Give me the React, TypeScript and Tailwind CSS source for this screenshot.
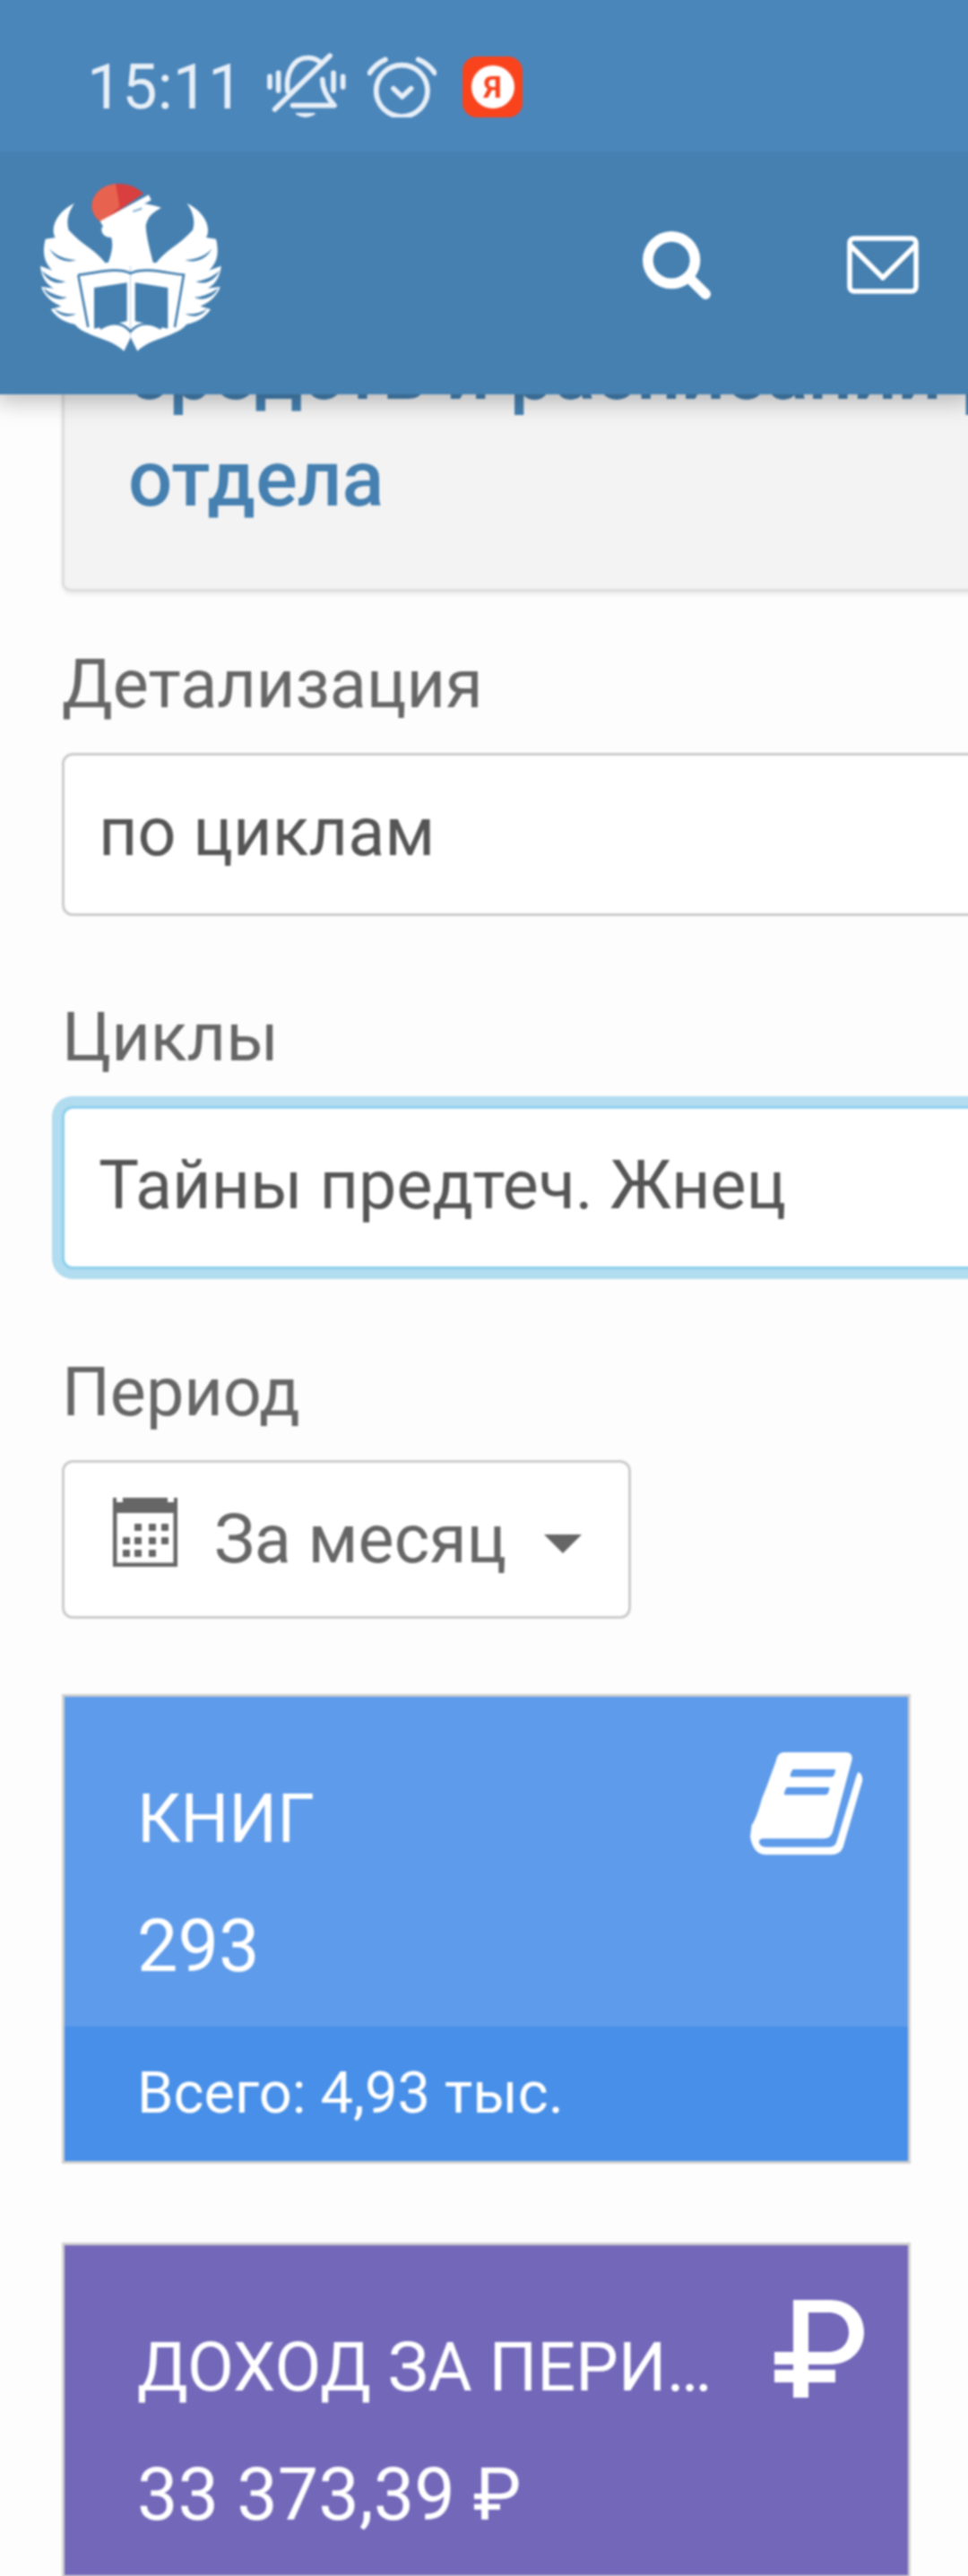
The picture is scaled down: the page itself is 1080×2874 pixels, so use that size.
import React from 'react';

const FONT = "font-['Roboto','Liberation_Sans',sans-serif]";

const Logo = () => (
  <svg width="240" height="220" viewBox="0 0 720 660" className="block">
    <g>
      {[0, 1].map((side) => (
        <g key={side} transform={side ? 'translate(695,0) scale(-1,1)' : undefined}>
          <path fill="#fff" d="M160 110C105 135 75 190 95 225L62 230C50 280 60 310 85 335L45 320C48 360 70 385 90 395L48 390C60 425 90 445 115 455L80 465C100 495 130 510 160 515C190 555 280 560 325 605L347 560V300L262 310C235 270 185 250 140 200C130 170 140 135 160 110Z" />
          <path fill="#4580b0" d="M75 262C95 285 130 300 165 300C135 312 95 300 75 262Z" />
          <path fill="#4580b0" d="M50 335C75 360 110 370 130 372C100 385 65 370 50 335Z" />
          <path fill="#4580b0" d="M55 395C85 415 115 425 135 425C105 440 70 425 55 395Z" />
          <path fill="#4580b0" d="M90 462C115 480 140 482 165 480C140 495 110 490 90 462Z" />
        </g>
      ))}
      <path fill="#fff" d="M250 195C262 170 300 140 350 125C370 105 400 110 450 125C425 140 405 150 398 185C400 230 415 275 425 320H268C285 280 290 245 282 225C265 225 248 215 250 195Z" />
    </g>
    <path d="M225 393L335 376V505L225 530Z" fill="#4580b0" />
    <path d="M362 376L472 393V530L362 505Z" fill="#4580b0" />
    <path d="M172 350C230 345 300 322 347 345C395 322 470 345 525 350L495 525M172 350L205 525" fill="none" stroke="#4580b0" strokeWidth="8" />
    <path d="M245 530C285 505 320 510 347 540C372 510 410 505 450 530" fill="none" stroke="#4580b0" strokeWidth="8" />
    <path d="M250 175C215 150 205 110 235 75C265 40 340 30 390 78Z" fill="#d93f3f" />
    <path d="M250 175C215 150 205 110 235 75C250 58 272 48 297 46L310 122Z" fill="#e8634f" />
    <path d="M245 170L408 82L416 100L255 188Z" fill="#fff" />
    <path d="M355 138L385 128" stroke="#8fb3d0" strokeWidth="7" />
  </svg>
);

const MutedBell = () => (
  <svg width="93" height="80" viewBox="40 30 280 240" fill="none" stroke="#e7eff7" strokeWidth="17" strokeLinecap="round" strokeLinejoin="round">
    <path d="M118 165C110 100 140 52 185 52C205 52 215 56 226 66" />
    <path d="M75 225L260 45" />
    <path d="M235 125C235 160 250 185 275 212L135 212" />
    <path d="M148 240Q178 258 208 240Z" fill="#e7eff7" strokeWidth="6" />
    <path d="M58 115V150M87 103V162M272 103V162M304 115V150" />
  </svg>
);

const AlarmClock = () => (
  <svg width="77" height="68" viewBox="395 35 231 204" fill="none" stroke="#e7eff7" strokeWidth="17" strokeLinecap="round" strokeLinejoin="round">
    <circle cx="510" cy="150" r="86" />
    <path d="M482 142L511 170L541 142" />
    <path d="M402 90Q422 60 455 45M565 45Q600 60 620 90" />
  </svg>
);

const SearchIcon = () => (
  <svg width="76" height="76" viewBox="64 128 1664 1664" fill="#fff">
    <path d="M1216 832q0-185-131.500-316.500t-316.500-131.500-316.500 131.500-131.500 316.500 131.500 316.500 316.500 131.500 316.500-131.500 131.500-316.500zm512 832q0 52-38 90t-90 38q-54 0-90-38l-343-342q-179 124-399 124-143 0-273.500-55.500t-225-150-150-225-55.500-273.500 55.500-273.500 150-225 225-150 273.500-55.500 273.500 55.500 225 150 150 225 55.500 273.500q0 220-124 399l343 343q37 37 37 90z" />
  </svg>
);

const EnvelopeIcon = () => (
  <svg width="80" height="65" viewBox="0 0 80 65" fill="none" stroke="#fff" strokeWidth="5.500" strokeLinejoin="round">
    <rect x="3" y="3" width="74" height="59" rx="5" />
    <path d="M3 10L40 47L77 10" />
  </svg>
);

const CalendarIcon = () => (
  <svg width="72" height="77" viewBox="0 0 72 77" fill="#666" className="mb-[17px]">
    <path d="M0 0H4V5H11V0H61V5H68V0H72V77H0ZM4.500 17V72.500H67.500V17Z" fillRule="evenodd" />
    {[
      [28, 33], [44, 33], [58, 33],
      [15, 48], [28, 48], [44, 48], [58, 48],
      [15, 62], [28, 62], [44, 62],
    ].map(([x, y]) => (
      <rect key={`${x}-${y}`} x={x - 4} y={y - 4} width="8" height="8" rx="1" />
    ))}
  </svg>
);

const BookIcon = () => (
  <svg width="127" height="117" viewBox="50 45 380 350" fill="#fff">
    <path fillRule="evenodd" d="M160 48H370Q392 48 390 72L325 315Q318 336 295 336H95Q78 336 80 350Q84 364 105 364H315Q332 364 338 348L405 125Q408 118 412 114Q428 125 424 145L360 365Q350 390 320 390H100Q60 388 50 330L55 290Q62 285 78 240L90 200Q105 165 115 135L135 80Q140 50 160 48ZM195 105Q190 105 188 112L184 122Q182 130 188 130H320Q328 130 330 124L334 112Q336 105 330 105ZM175 165Q170 165 168 172L164 182Q162 190 168 190H300Q308 190 310 184L314 172Q316 165 310 165Z" />
  </svg>
);

const RubleIcon = () => (
  <svg width="100" height="109" viewBox="0 0 100 109" fill="#fff">
    <path fillRule="evenodd" d="M21 0H62C85 0 100 16 100 36C100 56 85 72 62 72H38V78H68V92H38V109H21V92H0V78H21V72H0V58H21ZM38 14V58H60C75 58 83 48 83 36C83 24 75 14 60 14Z" />
  </svg>
);

const StatCard = ({ title, value, icon, color, footer, footerColor }: {
  title: string;
  value: string;
  icon: React.ReactNode;
  color: string;
  footer?: string;
  footerColor?: string;
}) => (
  <div className={`w-[947px] border-[3px] border-[#d0d0d0] text-white ${color}`}>
    <div className="flex h-[368px] pl-[81px] pr-[49px]">
      <div className="w-[642px] pt-[92px]">
        <div className="truncate text-[75.500px] leading-[88px] uppercase">{title}</div>
        <div className="mt-[55px] text-[81px] leading-[88px]">{value}</div>
      </div>
      <div className="ml-auto pt-[61px]">{icon}</div>
    </div>
    {footer && (
      <div className={`flex h-[150px] items-center pl-[81px] text-[65px] ${footerColor}`}>{footer}</div>
    )}
  </div>
);

const App = () => {
  return (
    <div className="h-[2874px] w-[1080px] overflow-hidden bg-[#fdfdfd]">
      {/* soft upscaled look; sheet overshoots the page by 4px so the blur leaves no pale edge */}
      <div className={`relative -ml-[4px] -mt-[4px] h-[2882px] w-[1088px] overflow-hidden bg-[#fdfdfd] blur-[1px] ${FONT}`}>
        <header className="absolute inset-x-0 top-0 z-10 shadow-[0_8px_24px_rgba(0,0,0,0.25)]">
          <div className="flex h-[173px] items-center bg-[#4b86bb] pl-[101px] pt-[29px] text-[#e7eff7]">
            <span className="w-[175px] text-[70px] leading-none">15:11</span>
            <span className="ml-[23px]"><MutedBell /></span>
            <span className="ml-[22px]"><AlarmClock /></span>
            <div className="ml-[29px] flex h-[68px] w-[67px] items-center justify-center rounded-[16px] bg-[#f9431c]">
              <div className="flex h-[48px] w-[48px] items-center justify-center rounded-full bg-white text-[34px] font-bold leading-none text-[#f9431c]">Я</div>
            </div>
          </div>
          <div className="flex h-[271px] items-center bg-[#4580b0]">
            <div className="ml-[34px] mt-[-10px]"><Logo /></div>
            <div className="mb-[18px] ml-[447px]"><SearchIcon /></div>
            <div className="mb-[18px] ml-[152px]"><EnvelopeIcon /></div>
          </div>
        </header>

        <main className="w-[1500px] pl-[73px] pt-[304px] text-[75.500px] text-[#666]">
          <div className="h-[360px] overflow-hidden rounded-[10px] border-[3px] border-[#ddd] bg-[#f3f3f3] pl-[71px] pt-[53px] text-[87px] font-medium leading-[119px] text-[#4580b0] shadow-[0_3px_4px_rgba(0,0,0,0.08)]">
            <div className="whitespace-nowrap">средств и расписании р</div>
            <div>отдела</div>
          </div>

          <div className="mt-[51px] leading-[105px]">Детализация</div>
          <div className="mt-[24px] flex h-[182px] items-center rounded-[12px] border-[3px] border-[#ccc] bg-white pb-[4px] pl-[38px] text-[#555]">по циклам</div>

          <div className="mt-[83px] leading-[105px]">Циклы</div>
          <div className="mt-[24px] flex h-[182px] items-center rounded-[12px] border-[3px] border-[#8fd0ee] bg-white pb-[4px] pl-[38px] text-[#555] shadow-[0_0_0_11px_#b2dcef]">Тайны предтеч. Жнец</div>

          <div className="mt-[85px] leading-[105px]">Период</div>
          <div className="mt-[23px] flex h-[177px] w-fit items-center rounded-[12px] border-[3px] border-[#ccc] bg-white pl-[54px] pr-[52px]">
            <CalendarIcon />
            <span className="ml-[41px]">За месяц</span>
            <span className="ml-[42px] mt-[10px] border-x-[21px] border-t-[21px] border-x-transparent border-t-[#666]" />
          </div>

          <div className="mt-[84px]">
            <StatCard
              title="Книг"
              value="293"
              icon={<BookIcon />}
              color="bg-[#5e9bea]"
              footer="Всего: 4,93 тыс."
              footerColor="bg-[#478fe8]"
            />
          </div>
          <div className="mt-[88px]">
            <StatCard
              title="Доход за период"
              value="33 373,39 ₽"
              icon={<RubleIcon />}
              color="bg-[#7367b9]"
            />
          </div>
        </main>
      </div>
    </div>
  );
};

export default App;
